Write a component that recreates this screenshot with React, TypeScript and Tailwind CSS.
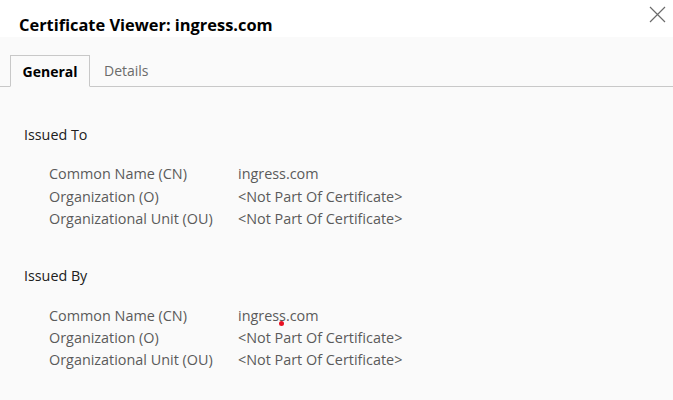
const rows = [
  { label: 'Common Name (CN)', value: 'ingress.com' },
  { label: 'Organization (O)', value: '<Not Part Of Certificate>' },
  { label: 'Organizational Unit (OU)', value: '<Not Part Of Certificate>' },
];

const Section = ({ title, dot }: { title: string; dot?: boolean }) => (
  <section>
    <h3 className="text-[14.3px] leading-[20px] text-[#202020]">{title}</h3>
    <div className="mt-[18px] flex flex-col pl-[25px]">
      {rows.map((r, i) => (
        <div key={r.label} className="flex h-[22.3px] items-center text-[14.4px] text-[#5a5a5a]">
          <span className="w-[189px]">{r.label}</span>
          <span className="relative">
            {r.value}
            {dot && i === 0 && (
              <span className="absolute left-[41px] top-[16px] h-[5px] w-[5px] rounded-full bg-[#e81123]" />
            )}
          </span>
        </div>
      ))}
    </div>
  </section>
);

export default function App() {
  return (
    <div
      className="flex h-[400px] w-[673px] flex-col overflow-hidden bg-[#fafafa]"
      style={{ fontFamily: '"Open Sans", "Noto Sans", sans-serif' }}
    >
      <header className="flex h-[37px] items-end justify-between bg-white pl-[19px] pr-[7px]">
        <h1 className="pb-[2px] text-[16.4px] font-bold leading-[20px] text-black">
          Certificate Viewer: ingress.com
        </h1>
        <button className="mb-auto mt-[6px] text-[#6b6b6b]">
          <svg width="17" height="17" viewBox="0 0 17 17" fill="none" stroke="currentColor" strokeWidth="1.2">
            <path d="M1 1L16 16M16 1L1 16" />
          </svg>
        </button>
      </header>

      <nav className="mt-[18px] flex h-[32px] border-b border-[#c8c8c8] pl-[10px]">
        <div className="-mb-px flex w-[80px] items-center justify-center border border-b-[#fafafa] border-[#c8c8c8] text-[14px] font-bold text-black">
          General
        </div>
        <div className="flex items-center px-[14px] text-[14px] text-[#6b6b6b]">Details</div>
      </nav>

      <div className="flex flex-col gap-[36.5px] px-[24px] pt-[38px]">
        <Section title="Issued To" />
        <Section title="Issued By" dot />
      </div>
    </div>
  );
}
